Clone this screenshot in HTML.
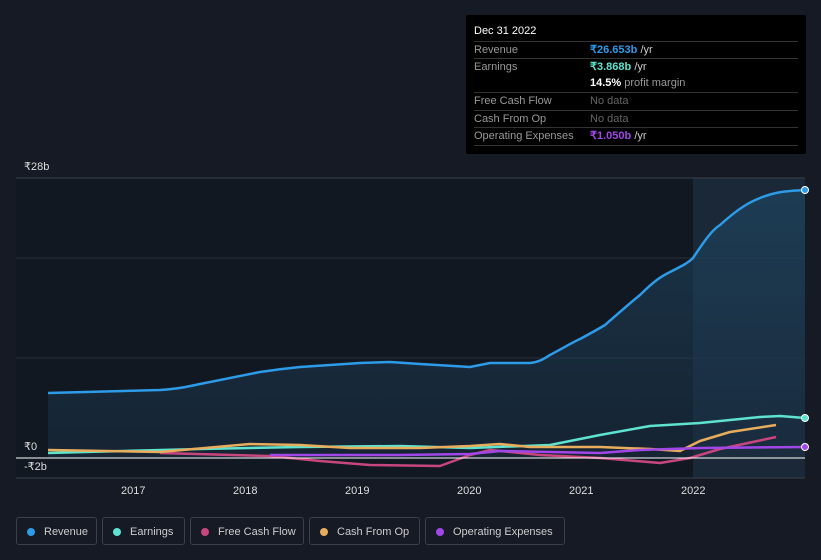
<!DOCTYPE html>
<html><head><meta charset="utf-8"><style>
body{margin:0;width:821px;height:560px;background:#151a24;font-family:"Liberation Sans",sans-serif;overflow:hidden;position:relative}
.tip{position:absolute;left:466px;top:15px;width:340px;height:139px;background:#000;border-radius:2px}
.tip .h{position:absolute;left:8px;top:10px;color:#fff;font-size:11px}
.row{position:absolute;left:8px;width:324px;border-top:1px solid #333;height:17px;font-size:11px;line-height:17px;color:#999}
.row .v{position:absolute;left:116px;top:0}
.leg{position:absolute;top:517px;height:28px;border:1px solid #3a404c;border-radius:3px;color:#ccc;font-size:11px;line-height:28px;box-sizing:border-box;padding-left:27px}
.leg i{position:absolute;left:10px;top:10px;width:8px;height:8px;border-radius:50%}
.ax{position:absolute;color:#ddd;font-size:11px}
</style></head><body>
<svg width="821" height="560" style="position:absolute;left:0;top:0">
<defs><linearGradient id="g" x1="0" y1="0" x2="0" y2="1"><stop offset="0" stop-color="#1e4a66" stop-opacity=".6"/><stop offset="1" stop-color="#1a2f44" stop-opacity=".5"/></linearGradient></defs>
<rect x="16" y="178" width="789" height="300" fill="#121821"/>
<rect x="693" y="178" width="112" height="300" fill="#1a2838"/>
<line x1="16" y1="178" x2="805" y2="178" stroke="#3a404c"/>
<line x1="16" y1="258" x2="805" y2="258" stroke="#2a303c"/>
<line x1="16" y1="358" x2="805" y2="358" stroke="#2a303c"/>
<line x1="16" y1="478" x2="805" y2="478" stroke="#3a404c"/>
<path d="M48,393 L160,390 C180,389 190,386 200,384 L260,372 C280,369 290,368 300,367 L360,363 L390,362 L420,364 L470,367 L490,363 L530,363 C540,362 545,358 550,355 C565,347 575,341 580,339 C595,331 600,328 605,325 C620,312 630,303 640,295 C655,280 662,276 670,272 C682,266 688,263 693,258 C705,240 712,230 720,225 C740,207 750,202 760,198 C775,192 785,191 805,190 L805,458 L48,458Z" fill="url(#g)"/>
<path d="M48,393 L160,390 C180,389 190,386 200,384 L260,372 C280,369 290,368 300,367 L360,363 L390,362 L420,364 L470,367 L490,363 L530,363 C540,362 545,358 550,355 C565,347 575,341 580,339 C595,331 600,328 605,325 C620,312 630,303 640,295 C655,280 662,276 670,272 C682,266 688,263 693,258 C705,240 712,230 720,225 C740,207 750,202 760,198 C775,192 785,191 805,190" fill="none" stroke="#2e9be8" stroke-width="2.5"/>
<polyline points="48,453 200,449 300,447 400,446 470,448 550,445 600,435 650,426 700,423 760,417 780,416 805,418" fill="none" stroke="#5de3cf" stroke-width="2.5" stroke-linejoin="round"/>
<polyline points="160,453 270,456 320,461 370,465 440,466 470,455 490,450 540,455 600,458 660,463 690,458 720,449 776,437" fill="none" stroke="#c8467e" stroke-width="2.5" stroke-linejoin="round"/>
<polyline points="48,450 160,452 250,444 300,445 350,448 420,448 470,446 500,444 530,447 600,447 650,449 680,451 700,441 730,432 776,425" fill="none" stroke="#e8ad5c" stroke-width="2.5" stroke-linejoin="round"/>
<polyline points="270,455 400,455 470,454 500,451 600,453 640,450 700,448 805,447" fill="none" stroke="#a147e8" stroke-width="2.5" stroke-linejoin="round"/>
<line x1="16" y1="458" x2="805" y2="458" stroke="#fff" stroke-width="1"/>
<circle cx="805" cy="190" r="3.5" fill="#2e9be8" stroke="#fff"/>
<circle cx="805" cy="418" r="3.5" fill="#5de3cf" stroke="#fff"/>
<circle cx="805" cy="447" r="3.5" fill="#a147e8" stroke="#fff"/>
</svg>
<div class="ax" style="left:24px;top:160px">₹28b</div>
<div class="ax" style="left:24px;top:440px">₹0</div>
<div class="ax" style="left:24px;top:460px">-₹2b</div>
<div class="ax" style="left:121px;top:485px">2017</div>
<div class="ax" style="left:233px;top:485px">2018</div>
<div class="ax" style="left:345px;top:485px">2019</div>
<div class="ax" style="left:457px;top:485px">2020</div>
<div class="ax" style="left:569px;top:485px">2021</div>
<div class="ax" style="left:681px;top:485px">2022</div>
<div class="tip">
<div class="h">Dec 31 2022</div>
<div class="row" style="top:26px">Revenue<span class="v"><b style="color:#2e9be8">₹26.653b</b> <span style="color:#ccc">/yr</span></span></div>
<div class="row" style="top:43px">Earnings<span class="v"><b style="color:#5de3cf">₹3.868b</b> <span style="color:#ccc">/yr</span></span></div>
<div class="row" style="top:60px;border:0"><span class="v"><b style="color:#fff">14.5%</b> profit margin</span></div>
<div class="row" style="top:77px">Free Cash Flow<span class="v" style="color:#666">No data</span></div>
<div class="row" style="top:95px">Cash From Op<span class="v" style="color:#666">No data</span></div>
<div class="row" style="top:112px">Operating Expenses<span class="v"><b style="color:#a147e8">₹1.050b</b> <span style="color:#ccc">/yr</span></span></div>
<div class="row" style="top:130px;height:0"></div>
</div>
<div class="leg" style="left:16px;width:81px"><i style="background:#2e9be8"></i>Revenue</div>
<div class="leg" style="left:102px;width:83px"><i style="background:#5de3cf"></i>Earnings</div>
<div class="leg" style="left:190px;width:114px"><i style="background:#c8467e"></i>Free Cash Flow</div>
<div class="leg" style="left:309px;width:111px"><i style="background:#e8ad5c"></i>Cash From Op</div>
<div class="leg" style="left:425px;width:140px"><i style="background:#a147e8"></i>Operating Expenses</div>
</body></html>
